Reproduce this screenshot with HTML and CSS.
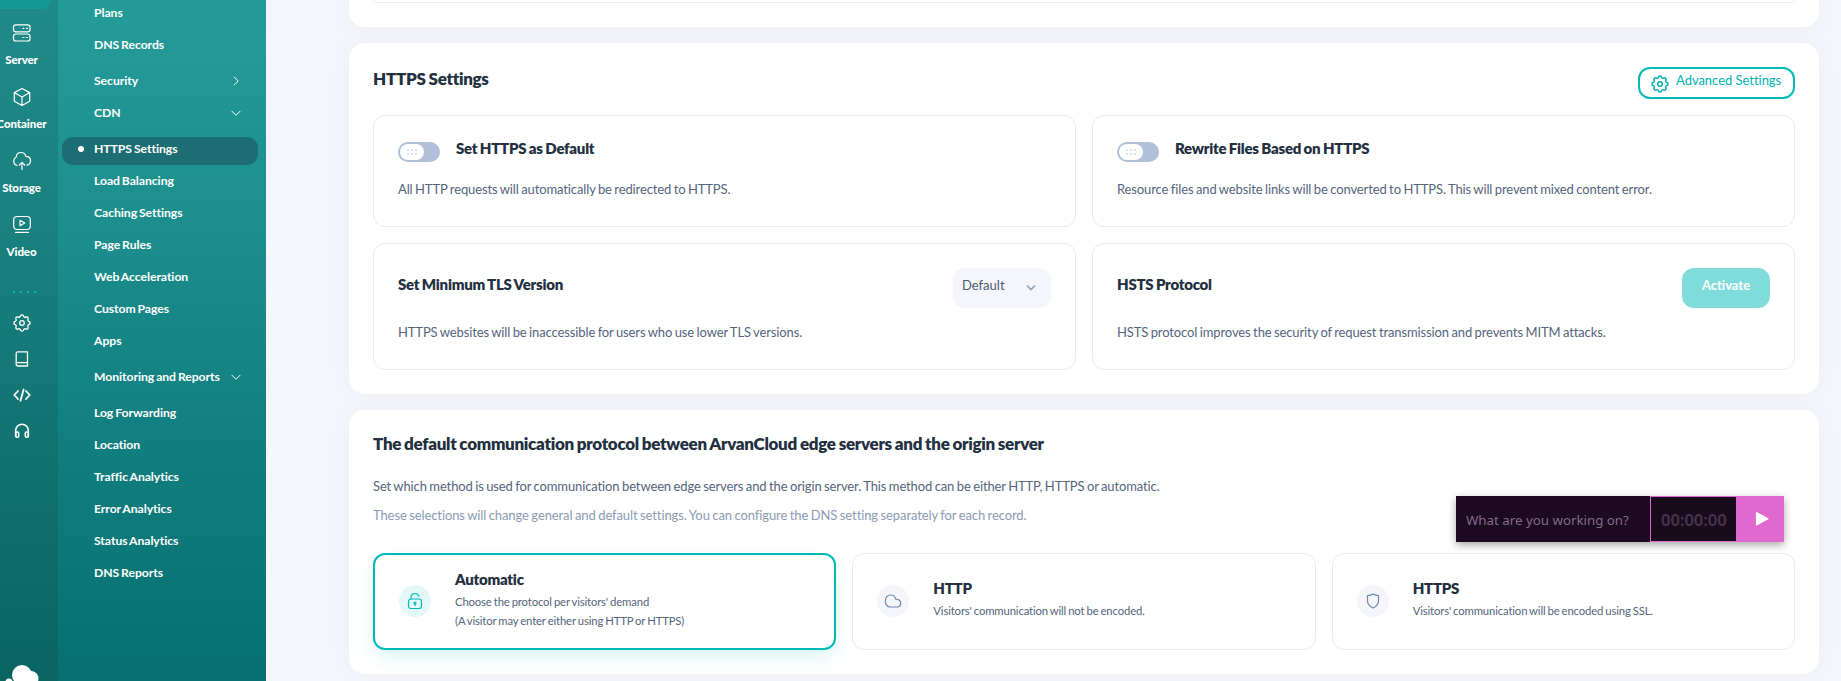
FILE: index.html
```html
<!DOCTYPE html>
<html lang="en">
<head>
<meta charset="utf-8">
<title>HTTPS Settings</title>
<link rel="stylesheet" href="styles.css">
</head>
<body>
<div class="app">
  <nav class="rail">
    <div class="rail-active"></div>
    <a class="product server"><svg width="22" height="22" viewBox="0 0 22 22"><rect x="2.5" y="2.8" width="16.500" height="7" rx="2.300"/><rect x="2.500" y="12" width="16.500" height="7" rx="2.300"/><path d="M12 6.300h1M15.500 6.300h1M12 15.500h1M15.500 15.500h1"/></svg><span>Server</span></a>
    <a class="product"><svg width="22" height="22" viewBox="0 0 22 22"><path d="M11 2.500l7.700 4.100v8.600L11 19.500l-7.700-4.300V6.600zM3.300 6.600L11 11l7.700-4.400M11 11v8.500"/></svg><span>Container</span></a>
    <a class="product"><svg width="22" height="22" viewBox="0 0 22 22"><path d="M6 15.500C4 14.800 2.700 13 2.700 11c0-1.700 1-3.200 2.500-4C5.400 4.300 7.300 2.500 10 2.500c2.500 0 4.300 1.500 4.900 3.800 2.900-.1 4.600 1.900 4.600 4.400 0 2.300-1.500 4-3.600 4.500M11 19.500v-7M8.300 15l2.700-2.700 2.700 2.700"/></svg><span>Storage</span></a>
    <a class="product"><svg width="22" height="22" viewBox="0 0 22 22"><rect x="2.700" y="2.500" width="16.600" height="13" rx="3.500"/><path d="M9 6.300v5.400l4.700-2.700zM4.500 18.400h13"/></svg><span>Video</span></a>
    <div class="dots"><i></i><i></i><i></i><i></i></div>
    <a class="tool"><svg width="18" height="18" viewBox="0 0 18 18"><path d="M7.590 1.740A1.600 1.600 0 0 1 10.410 1.740A1.700 1.700 0 0 0 13.140 2.870A1.600 1.600 0 0 1 15.130 4.860A1.700 1.700 0 0 0 16.260 7.590A1.600 1.600 0 0 1 16.260 10.410A1.700 1.700 0 0 0 15.130 13.140A1.600 1.600 0 0 1 13.140 15.130A1.700 1.700 0 0 0 10.410 16.260A1.600 1.600 0 0 1 7.590 16.260A1.700 1.700 0 0 0 4.860 15.130A1.600 1.600 0 0 1 2.870 13.140A1.700 1.700 0 0 0 1.740 10.410A1.600 1.600 0 0 1 1.740 7.590A1.700 1.700 0 0 0 2.870 4.860A1.600 1.600 0 0 1 4.860 2.870A1.700 1.700 0 0 0 7.590 1.740z"/><circle cx="9" cy="9" r="2.300"/></svg></a>
    <a class="tool"><svg width="18" height="18" viewBox="0 0 18 18"><path d="M4.700 1.800h9.800v14.200H4.700a1.500 1.500 0 0 1-1.500-1.500v-11a1.600 1.600 0 0 1 1.500-1.700zM3.300 12.700h11.200"/></svg></a>
    <a class="tool code"><svg width="18" height="18" viewBox="0 0 18 18"><path d="M5 5L1.300 9 5 13M13 5l3.700 4-3.700 4M10.600 3.500L7.500 14.700"/></svg></a>
    <a class="tool phones"><svg width="18" height="18" viewBox="0 0 18 18"><path d="M2.700 14.200V8.500a6.300 6.300 0 0 1 12.600 0v5.700"/><rect x="2.700" y="10" width="3" height="5.300" rx="1.300"/><rect x="12.300" y="10" width="3" height="5.300" rx="1.300"/></svg></a>
    <svg class="brand" width="36" height="17" viewBox="0 0 36 17"><circle cx="18" cy="11" r="10"/><circle cx="27" cy="14.500" r="7.500"/><circle cx="5" cy="18" r="3.500"/></svg>
  </nav>
  <aside class="menu">
    <div class="group">
      <a>Plans</a>
      <a>DNS Records</a>
    </div>
    <div class="group">
      <a>Security<svg width="10" height="10" viewBox="0 0 10 10"><path d="M3.200 1l4 4-4 4"/></svg></a>
      <a>CDN<svg width="10" height="10" viewBox="0 0 10 10"><path d="M1 3.300l4 4 4-4"/></svg></a>
    </div>
    <div class="group">
      <a class="current">HTTPS Settings</a>
      <a>Load Balancing</a>
      <a>Caching Settings</a>
      <a>Page Rules</a>
      <a>Web Acceleration</a>
      <a>Custom Pages</a>
      <a>Apps</a>
    </div>
    <div class="group">
      <a>Monitoring and Reports<svg width="10" height="10" viewBox="0 0 10 10"><path d="M1 3.300l4 4 4-4"/></svg></a>
    </div>
    <div class="group">
      <a>Log Forwarding</a>
      <a>Location</a>
      <a>Traffic Analytics</a>
      <a>Error Analytics</a>
      <a>Status Analytics</a>
      <a>DNS Reports</a>
    </div>
  </aside>
  <main class="content">
    <section class="card previous"><div class="box"></div></section>
    <section class="card">
      <header class="card-head">
        <h2>HTTPS Settings</h2>
        <button class="advanced"><svg width="18" height="18" viewBox="0 0 18 18"><path d="M7.590 1.740A1.600 1.600 0 0 1 10.410 1.740A1.700 1.700 0 0 0 13.140 2.870A1.600 1.600 0 0 1 15.130 4.860A1.700 1.700 0 0 0 16.260 7.590A1.600 1.600 0 0 1 16.260 10.410A1.700 1.700 0 0 0 15.130 13.140A1.600 1.600 0 0 1 13.140 15.130A1.700 1.700 0 0 0 10.410 16.260A1.600 1.600 0 0 1 7.590 16.260A1.700 1.700 0 0 0 4.860 15.130A1.600 1.600 0 0 1 2.870 13.140A1.700 1.700 0 0 0 1.740 10.410A1.600 1.600 0 0 1 1.740 7.590A1.700 1.700 0 0 0 2.870 4.860A1.600 1.600 0 0 1 4.860 2.870A1.700 1.700 0 0 0 7.590 1.740z"/><circle cx="9" cy="9" r="2.300"/></svg><span>Advanced Settings</span></button>
      </header>
      <div class="settings">
        <article class="box">
          <div class="switch-row"><span class="switch"><span class="knob"><i></i><i></i><i></i><i></i><i></i><i></i></span></span><h3>Set HTTPS as Default</h3></div>
          <p>All HTTP requests will automatically be redirected to HTTPS.</p>
        </article>
        <article class="box">
          <div class="switch-row"><span class="switch"><span class="knob"><i></i><i></i><i></i><i></i><i></i><i></i></span></span><h3>Rewrite Files Based on HTTPS</h3></div>
          <p>Resource files and website links will be converted to HTTPS. This will prevent mixed content error.</p>
        </article>
        <article class="box">
          <div class="action-row"><h3>Set Minimum TLS Version</h3><div class="select"><span>Default</span><svg width="10" height="10" viewBox="0 0 10 10"><path d="M1.500 3L5 6.700 8.500 3"/></svg></div></div>
          <p>HTTPS websites will be inaccessible for users who use lower TLS versions.</p>
        </article>
        <article class="box">
          <div class="action-row"><h3>HSTS Protocol</h3><button class="activate">Activate</button></div>
          <p>HSTS protocol improves the security of request transmission and prevents MITM attacks.</p>
        </article>
      </div>
    </section>
    <section class="card protocol">
      <h2>The default communication protocol between ArvanCloud edge servers and the origin server</h2>
      <p class="lead">Set which method is used for communication between edge servers and the origin server. This method can be either HTTP, HTTPS or automatic.</p>
      <p class="note">These selections will change general and default settings. You can configure the DNS setting separately for each record.</p>
      <div class="options">
        <div class="option selected">
          <span class="badge"><svg width="16" height="18" viewBox="0 0 16 18"><rect x="1.500" y="7" width="13" height="9.500" rx="2.500"/><path d="M4 7V5.500C4 3 5.700 1.500 8 1.500c2 0 3.400 1.100 3.900 2.800M8 11.500v2"/><circle cx="8" cy="11" r="1"/></svg></span>
          <div><h3>Automatic</h3><p>Choose the protocol per visitors' demand<br>(A visitor may enter either using HTTP or HTTPS)</p></div>
        </div>
        <div class="option">
          <span class="badge"><svg width="18" height="16" viewBox="0 0 18 16"><path d="M6.300 14C3.300 14 1.300 11.500 1.300 8c0-3.600 2.300-6 5.300-6 2.700 0 4.600 1.700 5.100 4.200 3 .2 5 1.700 5 4.100 0 2.300-1.500 3.700-3.700 3.700z"/></svg></span>
          <div><h3>HTTP</h3><p>Visitors' communication will not be encoded.</p></div>
        </div>
        <div class="option">
          <span class="badge"><svg width="16" height="18" viewBox="0 0 16 18"><path d="M8 2c1.500 1.100 3.400 1.600 5.500 1.600V9c0 3-1.900 5.300-5.500 7-3.600-1.700-5.500-4-5.500-7V3.600C4.600 3.600 6.500 3.100 8 2z"/></svg></span>
          <div><h3>HTTPS</h3><p>Visitors' communication will be encoded using SSL.</p></div>
        </div>
      </div>
    </section>
  </main>
  <div class="timer">
    <div class="timer-task">What are you working on?</div>
    <div class="timer-clock">00:00:00</div>
    <div class="timer-start"><svg width="14" height="16" viewBox="0 0 14 16"><path d="M1.500 1.500v12.500L13 7.800z"/></svg></div>
  </div>
</div>
</body>
</html>
```
FILE: styles.css
```css
* { box-sizing: border-box; }
body { margin: 0; background: #f5f6fb; font-family: Lato, "Open Sans", sans-serif; font-variant-ligatures: none; overflow: hidden; }
h2, h3, p { margin: 0; white-space: nowrap; word-spacing: -.7px; }
svg { display: block; fill: none; stroke: currentColor; stroke-width: 1.2; stroke-linecap: round; stroke-linejoin: round; flex: none; }
button { font-family: inherit; font-variant-ligatures: none; }
.app { display: flex; width: 1841px; height: 681px; position: relative; overflow: hidden; }

.rail { width: 58px; height: 681px; flex: none; display: flex; flex-direction: column; align-items: center; padding-right: 15px; color: #fff; background: linear-gradient(#1f8b89, #19807e 35%, #096462); overflow: hidden; }
.rail-active { width: 50px; height: 9px; flex: none; align-self: flex-start; background: #169897; border-radius: 0 0 8px 0; }
.product { height: 64px; flex: none; width: 80px; display: flex; flex-direction: column; align-items: center; padding-top: 13px; }
.product span { margin-top: 7px; font-size: 11.5px; line-height: 18px; font-weight: 900; letter-spacing: -.1px; }
.dots { display: flex; gap: 5px; margin: 26px 0 0 6px; height: 3px; flex: none; }
.dots i { width: 2px; height: 2px; background: #09b5b5; }
.tool { height: 36px; flex: none; display: flex; align-items: center; margin-left: 1px; }
.dots + .tool { margin-top: 11px; }
.tool svg { stroke-width: 1.3; }
.tool.code svg { stroke-width: 1.8; }
.tool.phones svg { stroke-width: 1.6; }
.brand { fill: #fff; stroke: none; margin-top: auto; }

.menu { width: 208px; height: 681px; flex: none; padding: 1px 8px 0 4px; color: #fff; background: linear-gradient(#259b99, #1e918f 28%, #128080 62%, #067070); display: flex; flex-direction: column; gap: 8px; }
.group { display: flex; flex-direction: column; gap: 4px; }
.group a { height: 28px; padding: 0 15px 6px 32px; display: flex; align-items: center; justify-content: space-between; font-size: 12.2px; font-weight: 700; letter-spacing: -.05px; word-spacing: -1px; border-radius: 11px; white-space: nowrap; }
.group a svg { stroke-width: 1; margin: 1px 2px 0 0; }
.group .current { background: #1c6e73; justify-content: flex-start; padding-left: 16px; }
.current::before { content: ""; width: 6px; height: 6px; border-radius: 50%; background: #fff; margin: 1px 10px 0 0; }

.content { flex: 1; padding: 0 22px 0 83px; display: flex; flex-direction: column; gap: 16px; }
.card { flex: none; background: #fff; border-radius: 16px; padding: 24px; box-shadow: 0 0 24px rgba(60, 60, 60, .03); }
.previous { height: 27px; padding: 0 24px; overflow: hidden; border-radius: 0 0 16px 16px; }
.previous .box { height: 3px; border-top: 0; border-radius: 0 0 12px 12px; padding: 0; }
.card-head { display: flex; justify-content: space-between; height: 48px; }
h2 { font-size: 17px; line-height: 23px; font-weight: 800; letter-spacing: -.3px; color: #23303f; }
h3 { font-size: 15px; line-height: 20px; font-weight: 800; letter-spacing: -.25px; color: #23303f; }
.advanced { width: 157px; height: 32px; border: 2px solid #00bab8; border-radius: 12px; background: #fff; color: #00b2b2; font-size: 13px; line-height: 20px; padding: 0 0 0 11px; display: flex; gap: 7px; }
.advanced svg { margin-top: 6px; stroke-width: 1.5; }
.advanced span { margin-top: 1px; white-space: nowrap; letter-spacing: -.03px; }
.settings { display: grid; grid-template-columns: 1fr 1fr; grid-template-rows: 112px 127px; gap: 16px; }
.box { border: 1px solid #e8ebf4; border-radius: 12px; padding: 24px; }
.box p { font-size: 13px; line-height: 20px; letter-spacing: -.12px; color: #54657d; }
.switch-row { display: flex; gap: 16px; height: 39px; }
.switch-row h3 { line-height: 17px; }
.switch { width: 42px; height: 20px; border-radius: 10px; background: #b0c0d8; margin-top: 2px; padding: 2px; }
.knob { width: 24px; height: 16px; border-radius: 8px; background: #fff; display: grid; grid-template-columns: 2px 2px 2px; grid-template-rows: 2px 2px; gap: 2px; place-content: center; }
.knob i { background: #dce3ef; }
.action-row { display: flex; justify-content: space-between; height: 54px; }
.action-row h3 { margin-top: 6px; }
.select { width: 98px; height: 40px; border-radius: 12px; background: #f5f6fb; color: #4c5b70; font-size: 13px; line-height: 20px; padding: 7px 15px 0 9px; display: flex; justify-content: space-between; }
.select svg { color: #8fa3bf; stroke-width: 1.7; margin-top: 8px; }
.activate { width: 88px; height: 40px; border: 0; border-radius: 12px; background: #80dcdb; color: #fff; font-size: 13px; font-weight: 700; padding: 0 0 6px; }
.protocol { padding-top: 22px; height: 264px; }
.lead { margin-top: 21px; font-size: 13px; line-height: 20px; letter-spacing: -.12px; color: #54657d; }
.note { margin-top: 9px; font-size: 13px; line-height: 20px; letter-spacing: -.1px; color: #8a9bb3; }
.options { display: grid; grid-template-columns: repeat(3, 1fr); gap: 16px; margin-top: 26px; padding-top: 2px; }
.option { height: 97px; border: 1px solid #e8ebf4; border-radius: 12px; padding: 0 24px 5px; display: flex; align-items: center; gap: 24px; }
.option.selected { border: 2px solid #00bab8; padding: 0 24px 4px; box-shadow: 0 8px 20px -4px rgba(0, 186, 184, .2); }
.option p { font-size: 11.3px; line-height: 19px; letter-spacing: -.14px; margin-top: 3px; color: #54657d; }
.badge { width: 32px; height: 32px; margin-top: 4px; border-radius: 50%; background: #f5f6fb; color: #7188aa; display: grid; place-items: center; flex: none; }
.selected .badge { background: #e5f8f8; color: #00bab8; margin-top: 3px; }

.timer { position: absolute; left: 1456px; top: 496px; width: 328px; height: 46px; display: flex; font-family: "Noto Sans", sans-serif; box-shadow: 0 3px 8px rgba(0, 0, 0, .35); }
.timer-task { width: 194px; background: #1c0922; color: #846c84; font-size: 13.3px; line-height: 48px; padding-left: 10px; white-space: nowrap; }
.timer-clock { width: 87px; border: 1px solid #e069d0; background: #190a1c; color: #47344a; font-size: 16.5px; font-weight: 600; line-height: 45px; padding-left: 10px; }
.timer-start { width: 47px; background: #e069d0; color: #fff; display: grid; place-items: center; }
.timer-start svg { fill: currentColor; margin-left: 3px; }
```
